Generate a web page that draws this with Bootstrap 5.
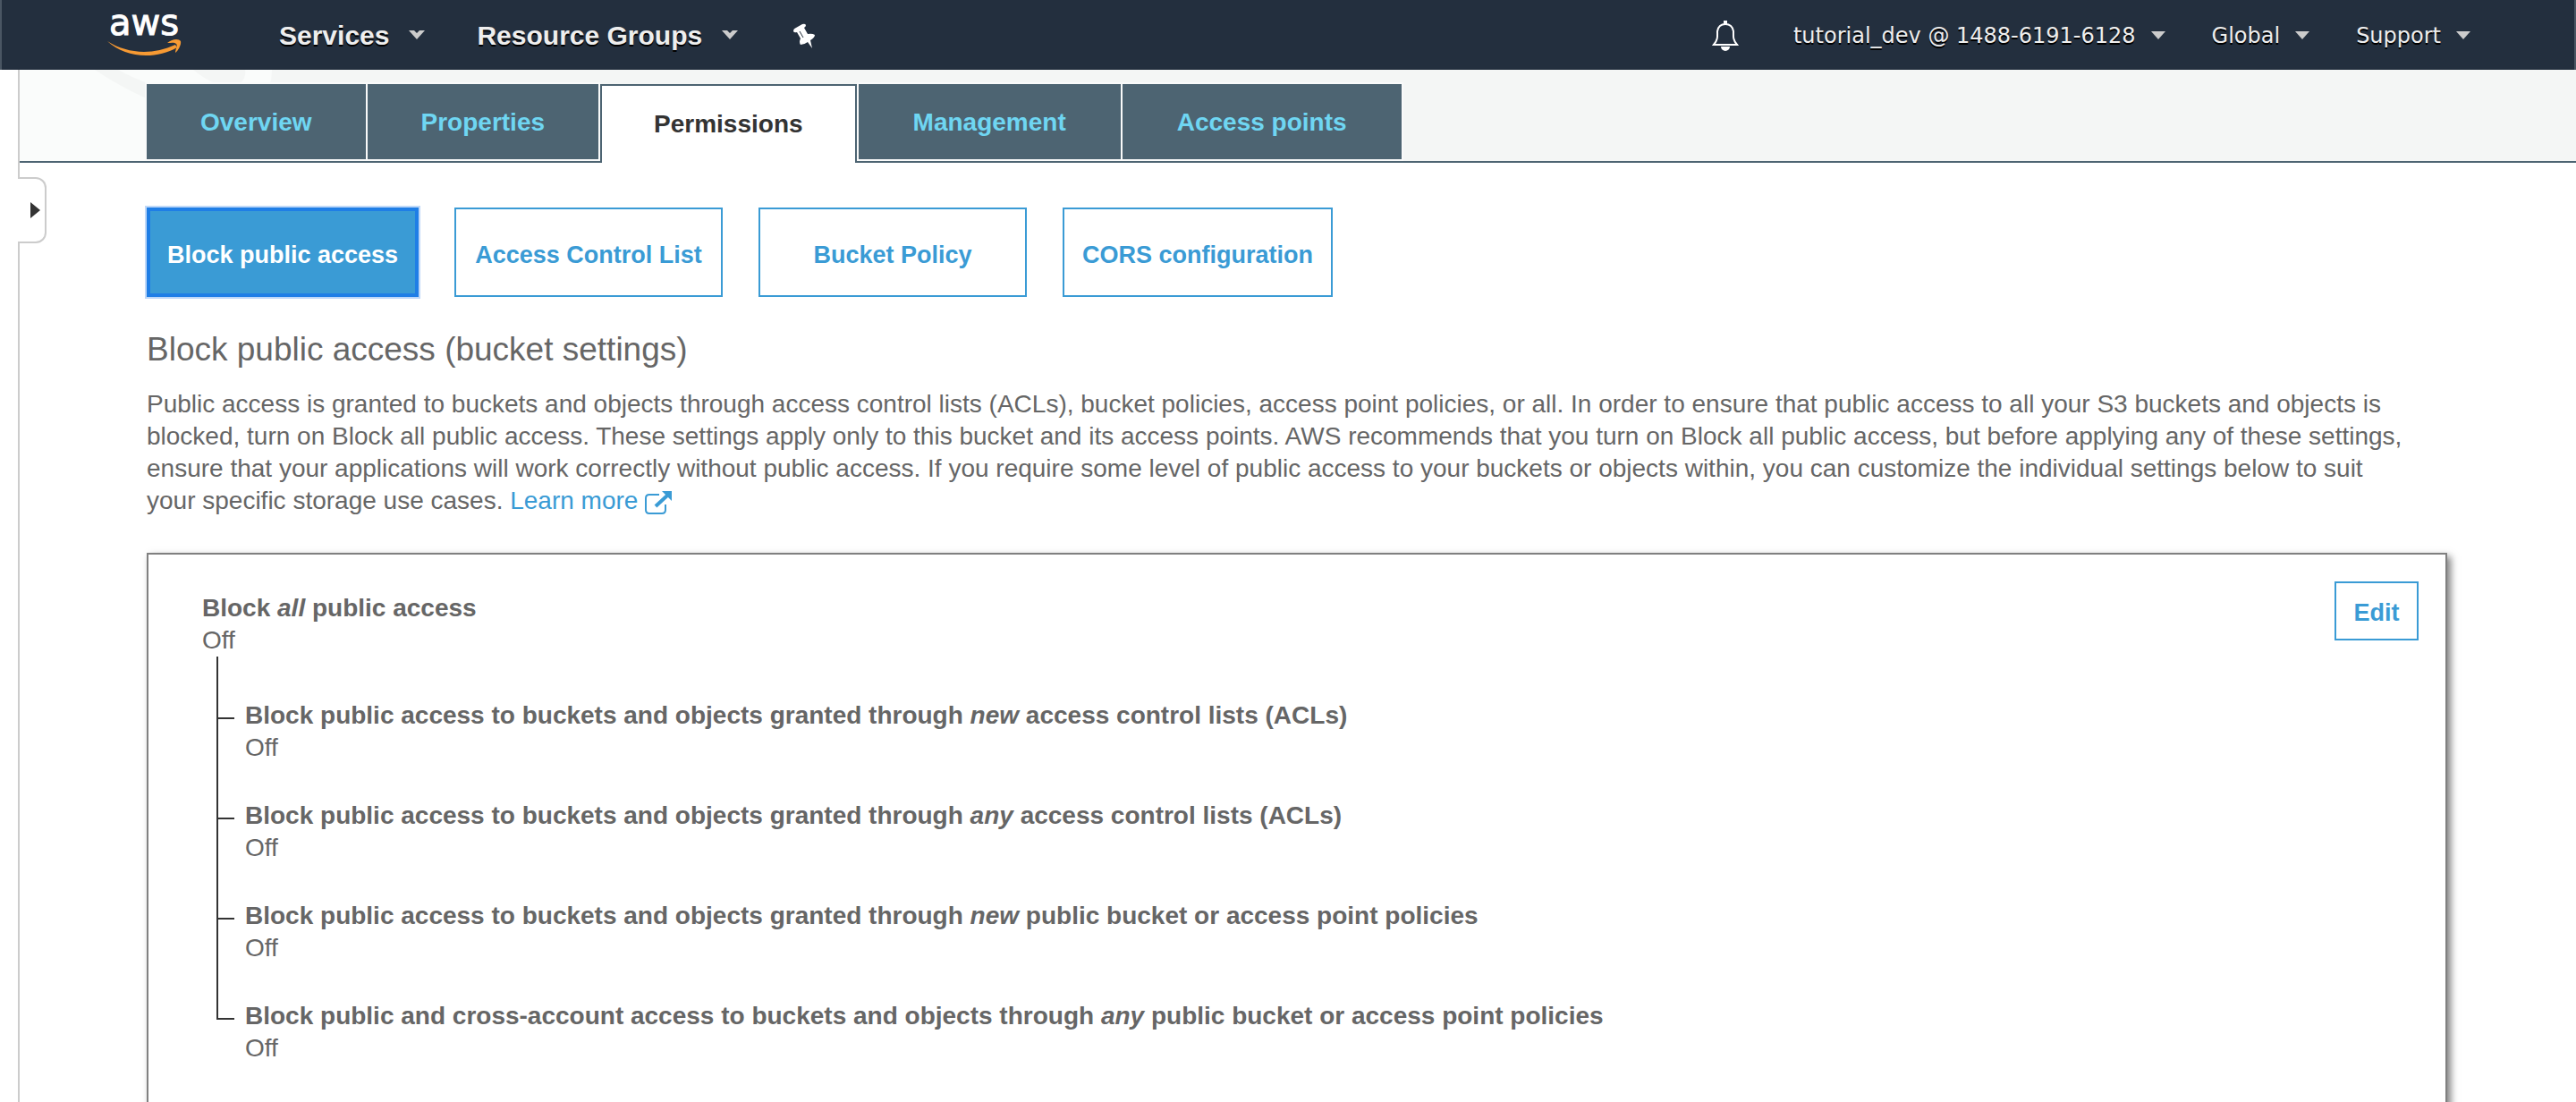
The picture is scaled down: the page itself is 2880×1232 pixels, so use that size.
<!DOCTYPE html>
<html lang="en">
<head>
<meta charset="utf-8">
<meta name="viewport" content="width=device-width, initial-scale=1">
<title>S3 Management Console</title>
<link href="https://cdn.jsdelivr.net/npm/bootstrap@5.3.0/dist/css/bootstrap.min.css" rel="stylesheet">
<style>
  body { font-family: "Liberation Sans", Arial, sans-serif; font-size: 28px; line-height: 36px; color: #666; background: #fff; min-height: 100vh; overflow: hidden; }
  .top-bar { height: 78px; background: #232f3e; border-left: 2px solid #4a5663; border-right: 2px solid #4a5663; padding: 0 116px 0 118px; }
  .top-bar button { background: none; border: 0; padding: 2px 0 0; color: #eee; font-weight: inherit; text-shadow: 0 2px 0 #000; }
  .top-main { font-weight: 700; font-size: 30px; gap: 58px; }
  .top-main .logo-link { margin-right: 50px; }
  .top-item { gap: 22px; }
  .top-user { font-family: "DejaVu Sans", Verdana, sans-serif; font-size: 24px; gap: 52px; }
  .top-user .top-item { gap: 17px; }
  .shell { margin-left: 20px; border-left: 2px solid #ccc; min-height: calc(100vh - 78px); }
  .tab-strip { background: #f4f6f5; height: 104px; border-bottom: 2px solid #4d6472; padding: 16px 142px 0; }
  .strip-art { left: 0; top: 0; }
  .s3-tabs { gap: 2px; height: 88px; }
  .s3-tabs .nav-link { height: 84px; padding: 2px 60px 0; border: 0; border-radius: 0; background: #4d6472; color: #6fd6f2; font-weight: 700; box-shadow: 0 0 0 2px #f9fafa; display: flex; align-items: center; }
  .s3-tabs .nav-link.active { height: 88px; padding: 0 58px; background: #fff; color: #333; border: 2px solid #4d6472; border-bottom: 0; box-shadow: none; }
  .s3-tabs .active ~ .nav-link { padding: 2px 61px 0; }
  .side-handle { left: 20px; top: 198px; width: 32px; height: 74px; padding: 0 5px 0 0; background: #fff; border: 2px solid #ccc; border-left: 0; border-radius: 0 12px 12px 0; }
  .s3-main { padding: 50px 144px 0 142px; }
  .pill-row { gap: 40px; }
  .out-btn { min-width: 300px; height: 100px; padding: 6px 20px 0; border: 2px solid #3a9bd5; border-radius: 0; background: #fff; color: #3a9bd5; font-weight: 700; font-size: 27px; }
  .out-btn.on { min-width: 304px; padding: 6px 16px 0; border: 4px solid #1f7ee6; background: #3a9bd5; color: #fff; box-shadow: 0 0 0 2px #bfd8f8; }
  .out-btn.edit-btn { min-width: 94px; height: 66px; padding: 4px 18px 0; }
  .s3-title { font-size: 37px; line-height: 44px; font-weight: 400; margin: 37px 0 21px; }
  .s3-intro { margin: 0; padding-right: 40px; }
  .s3-link { color: #3a9bd5; text-decoration: none; }
  .settings { margin-top: 40px; border: 2px solid #808080; box-shadow: 4px 4px 8px rgba(0,0,0,.5); padding: 30px 30px 60px 60px; min-height: 640px; }
  .settings-head { padding-top: 12px; }
  .tree { margin: 0 0 0 16px; padding: 0; list-style: none; }
  .tree li { position: relative; padding: 0 0 40px 32px; }
  .tree li:first-child { padding-top: 48px; }
  .tree li::before { content: ""; position: absolute; left: 0; top: 0; bottom: 0; border-left: 2px solid #333; }
  .tree li::after { content: ""; position: absolute; left: 0; top: 20px; width: 20px; border-top: 2px solid #333; }
  .tree li:first-child::after { top: 68px; }
  .tree li:last-child::before { bottom: auto; height: 22px; }
</style>
</head>
<body>
<header class="top-bar d-flex align-items-center justify-content-between">
  <div class="top-main d-flex align-items-center">
    <a href="#" aria-label="AWS home" class="logo-link d-flex">
      <svg width="84" height="78" viewBox="0 0 84 78"><text x="2" y="39" font-family="DejaVu Sans" font-weight="400" font-size="40" fill="#fff" stroke="#fff">aws</text><path d="M0 46C22 60 50 62 76 50L78 53C54 67 20 65 0 46Z" fill="#f79a33"/><path d="M67 48C73 43 80 43 82 46C83 50 79 57 76 59C76 55 79 51 77 49C75 47 71 48 67 48Z" fill="#f79a33"/></svg>
    </a>
    <div class="top-item d-flex align-items-center">
      <button type="button">Services</button>
      <svg width="18" height="10" viewBox="0 0 18 10"><path d="M0 0H6L9 3L12 0H18L9 10Z" fill="#ccc"/></svg>
    </div>
    <div class="top-item d-flex align-items-center">
      <button type="button">Resource Groups</button>
      <svg width="18" height="10" viewBox="0 0 18 10"><path d="M0 0H6L9 3L12 0H18L9 10Z" fill="#ccc"/></svg>
    </div>
    <button type="button" aria-label="Pin shortcuts" class="ms-1 d-flex"><svg width="24" height="28" viewBox="0 0 24 28"><path d="M0 9Q0 6 3 5L10 1Q13 0 14 2Q14 4 12 5L16 12Q21 11 24 13Q24 16 19 19L21 28L16 21Q12 24 8 24Q6 21 8 17L4 10Q1 11 0 9Z" fill="#fff"/><path d="M7 9L11 16" stroke="#232f3e" stroke-width="1"/></svg></button>
  </div>
  <div class="top-user d-flex align-items-center">
    <button type="button" aria-label="Notifications" class="d-flex me-2"><svg width="32" height="36" viewBox="0 0 32 36"><path d="M16 1V5M3 28C8 22 7 18 7 13C8 7 11 5 16 5C21 5 24 7 25 13C25 18 24 22 29 28Z" fill="none" stroke="#fff" stroke-width="2"/><path d="M11 30A5 5 0 0 0 21 30M14 1H18V5H14ZM2 27H30V29H2Z" fill="#fff"/></svg></button>
    <div class="top-item d-flex align-items-center">
      <button type="button">tutorial_dev @ 1488-6191-6128</button>
      <svg width="16" height="9" viewBox="0 0 16 9"><path d="M0 0H16L8 9Z" fill="#ccc"/></svg>
    </div>
    <div class="top-item d-flex align-items-center">
      <button type="button">Global</button>
      <svg width="16" height="9" viewBox="0 0 16 9"><path d="M0 0H16L8 9Z" fill="#ccc"/></svg>
    </div>
    <div class="top-item d-flex align-items-center">
      <button type="button">Support</button>
      <svg width="16" height="9" viewBox="0 0 16 9"><path d="M0 0H16L8 9Z" fill="#ccc"/></svg>
    </div>
  </div>
</header>
<button type="button" class="side-handle position-absolute d-flex align-items-center justify-content-end" aria-label="Open navigation"><svg width="11" height="18" viewBox="0 0 11 18"><path d="M0 0L11 9L0 18Z" fill="#333"/></svg></button>
<div class="shell">
  <div class="tab-strip position-relative">
    <svg class="strip-art position-absolute" width="290" height="102" viewBox="0 0 290 102" aria-hidden="true"><path d="M0 0H282Q282 10 279 20V102H0Z" fill="#fafcfb"/><path d="M84 0H110Q126 9 146 16V34Q112 19 84 0ZM194 0H252Q254 8 246 16H220Q206 10 194 0Z" fill="#f4f6f5"/></svg>
    <nav class="s3-tabs nav position-relative">
      <a class="nav-link" href="#">Overview</a>
      <a class="nav-link" href="#">Properties</a>
      <a class="nav-link active" href="#">Permissions</a>
      <a class="nav-link" href="#">Management</a>
      <a class="nav-link" href="#">Access points</a>
    </nav>
  </div>
  <main class="s3-main">
    <div class="pill-row d-flex">
      <button type="button" class="btn out-btn on">Block public access</button>
      <button type="button" class="btn out-btn">Access Control List</button>
      <button type="button" class="btn out-btn">Bucket Policy</button>
      <button type="button" class="btn out-btn">CORS configuration</button>
    </div>
    <h1 class="s3-title">Block public access (bucket settings)</h1>
    <p class="s3-intro">Public access is granted to buckets and objects through access control lists (ACLs), bucket policies, access point policies, or all. In order to ensure that public access to all your S3 buckets and objects is blocked, turn on Block all public access. These settings apply only to this bucket and its access points. AWS recommends that you turn on Block all public access, but before applying any of these settings, ensure that your applications will work correctly without public access. If you require some level of public access to your buckets or objects within, you can customize the individual settings below to suit your specific storage use cases. <a class="s3-link" href="#">Learn more <svg width="30" height="26" viewBox="0 0 30 26"><path d="M16 4H5Q1 4 1 8V21Q1 25 5 25H19Q23 25 23 21V15" fill="none" stroke="#3a9bd5" stroke-width="2"/><path d="M12 17L25 5" stroke="#3a9bd5" stroke-width="4"/><path d="M19 0H30V11Z" fill="#3a9bd5"/></svg></a></p>
    <section class="settings">
      <div class="d-flex justify-content-between align-items-start">
        <div class="settings-head"><div><b>Block <i>all</i> public access</b></div><div>Off</div></div>
        <button type="button" class="btn out-btn edit-btn">Edit</button>
      </div>
      <ul class="tree">
        <li><b>Block public access to buckets and objects granted through <i>new</i> access control lists (ACLs)</b><div>Off</div></li>
        <li><b>Block public access to buckets and objects granted through <i>any</i> access control lists (ACLs)</b><div>Off</div></li>
        <li><b>Block public access to buckets and objects granted through <i>new</i> public bucket or access point policies</b><div>Off</div></li>
        <li><b>Block public and cross-account access to buckets and objects through <i>any</i> public bucket or access point policies</b><div>Off</div></li>
      </ul>
    </section>
  </main>
</div>
<script src="https://cdn.jsdelivr.net/npm/bootstrap@5.3.0/dist/js/bootstrap.bundle.min.js"></script>
</body>
</html>
